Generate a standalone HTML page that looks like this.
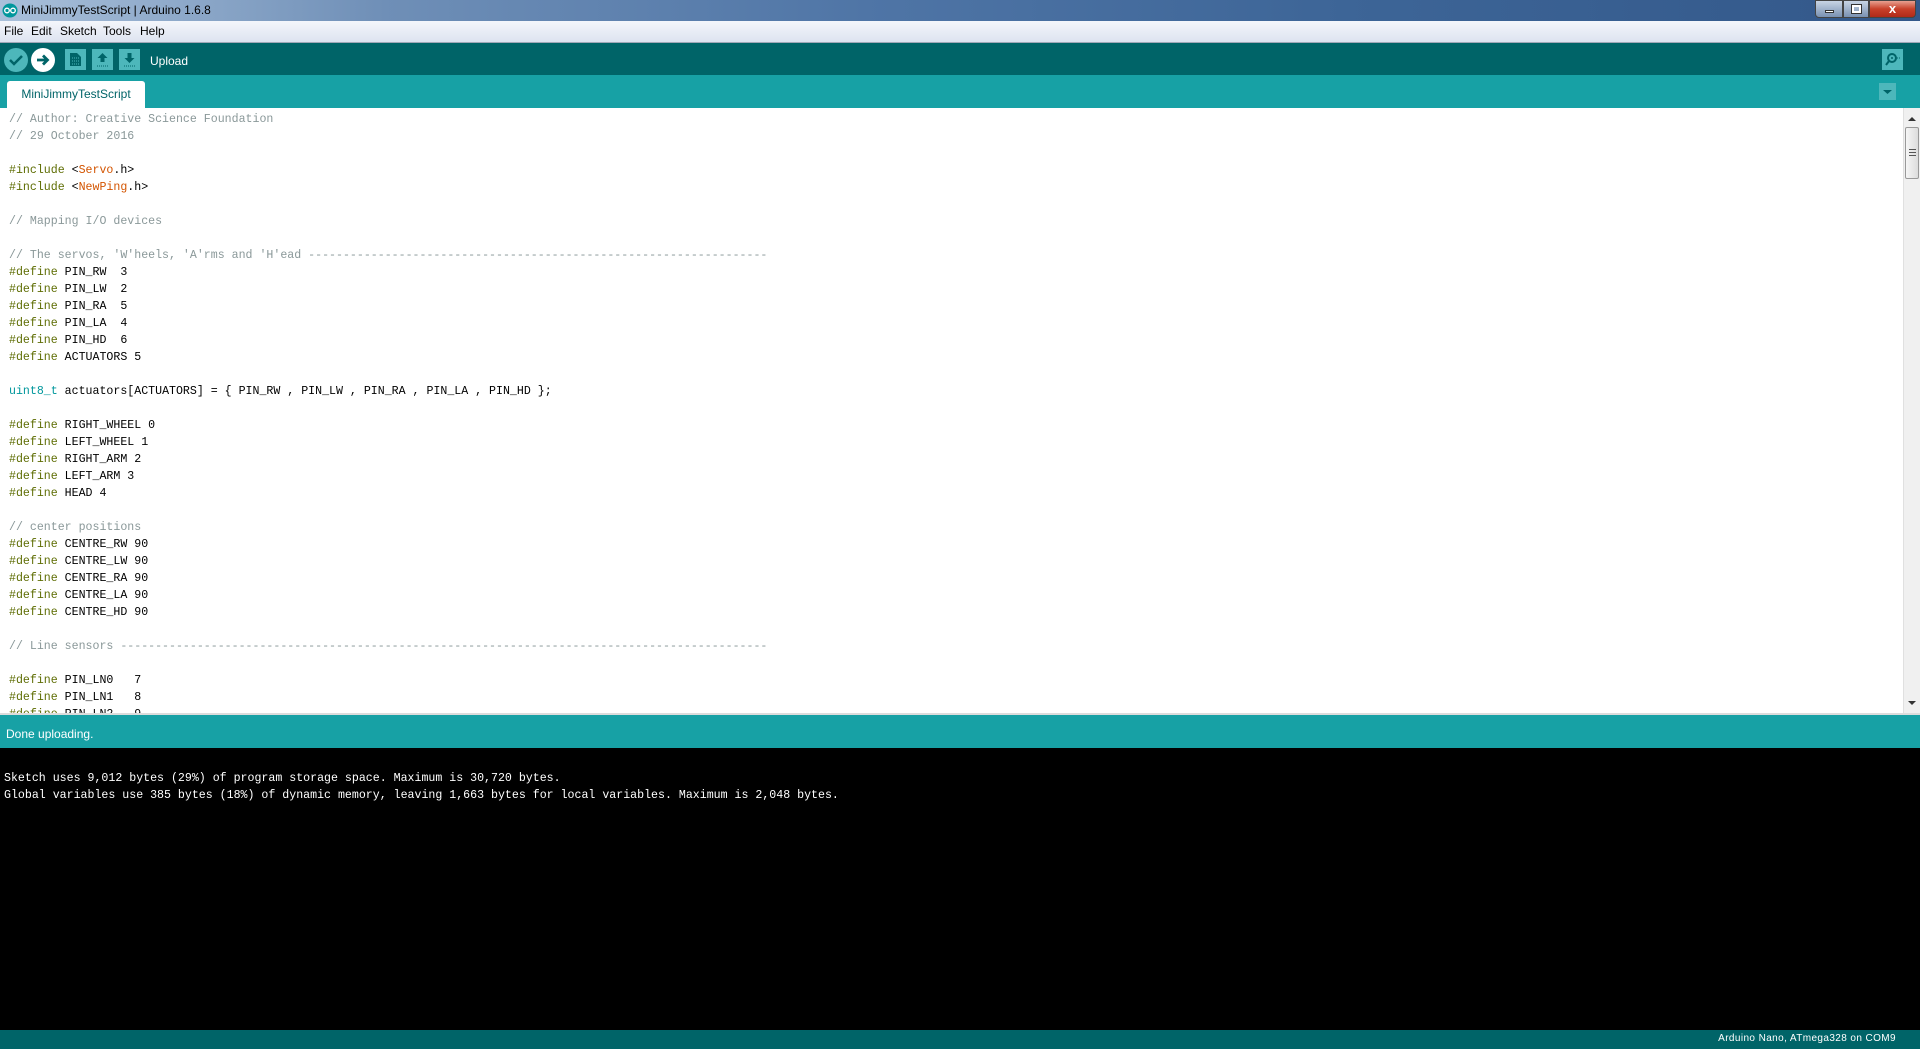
<!DOCTYPE html>
<html><head><meta charset="utf-8">
<style>
*{margin:0;padding:0;box-sizing:border-box}
body{width:1920px;height:1049px;overflow:hidden;background:#fff;font-family:"Liberation Sans",sans-serif;position:relative}
.abs{position:absolute}
#title{left:0;top:0;width:1920px;height:21px;background:linear-gradient(90deg,#a9c0da 0%,#6f8fb7 20%,#4f75a6 45%,#3d6597 70%,#33588a 100%);}
#title span{position:absolute;left:21px;top:3px;font-size:12px;color:#000}
#menu{left:0;top:21px;width:1920px;height:22px;background:linear-gradient(#f4f6fb,#dde3f0);border-bottom:1px solid #a0a8b8}
#menu span{position:absolute;top:3px;font-size:12px;color:#000}
#tool{left:0;top:43px;width:1920px;height:32px;background:#006468}
#tabs{left:0;top:75px;width:1920px;height:33px;background:#17a1a5}
#tab{left:7px;top:81px;width:138px;height:27px;background:#fff;border-radius:3px 3px 0 0;font-size:12px;color:#006468;text-align:center;line-height:26px}
#code{left:0;top:108px;width:1903px;height:605px;overflow:hidden;background:#fff}
pre{font-family:"Liberation Mono",monospace;font-size:11.6px;line-height:17px;color:#000;white-space:pre}
#code pre{position:absolute;left:9px;top:3px}
.c{color:#8a9899}.d{color:#5e6d03}.o{color:#d35400}.t{color:#00979c}
#sb{left:1903px;top:108px;width:17px;height:605px;background:#f0f0f0;border-left:1px solid #e0e0e0}
#status{left:0;top:713px;width:1920px;height:35px;background:#17a1a5;border-top:2px solid #dcdcdc}
#status span{position:absolute;left:6px;top:12px;font-size:12px;color:#fff}
#con{left:0;top:748px;width:1920px;height:282px;background:#000}
#con pre{position:absolute;left:4px;top:22px;color:#fff}
#bot{left:0;top:1030px;width:1920px;height:19px;background:#006468}
#bot span{position:absolute;right:24px;top:3px;font-size:10px;color:#fff;letter-spacing:.4px}
</style></head><body>
<div id="title" class="abs">
<svg class="abs" style="left:2px;top:3px" width="16" height="15"><ellipse cx="8" cy="7.5" rx="7.5" ry="7" fill="#00979c"/><circle cx="5" cy="7.5" r="2.3" fill="none" stroke="#fff" stroke-width="1.3"/><circle cx="11" cy="7.5" r="2.3" fill="none" stroke="#fff" stroke-width="1.3"/></svg>
<span>MiniJimmyTestScript | Arduino 1.6.8</span>
<div class="abs" style="left:1815px;top:0;width:28px;height:18px;background:linear-gradient(#c8d4e4,#7a92b2);border:1px solid #444;border-radius:0 0 0 4px"><div class="abs" style="left:9px;top:9px;width:9px;height:3px;background:#fff;border:1px solid #333"></div></div>
<div class="abs" style="left:1843px;top:0;width:26px;height:18px;background:linear-gradient(#c8d4e4,#7a92b2);border:1px solid #444"><div class="abs" style="left:8px;top:4px;width:9px;height:8px;border:2px solid #fff;outline:1px solid #333"></div></div>
<div class="abs" style="left:1869px;top:0;width:47px;height:18px;background:linear-gradient(#e8a090,#c8402a 50%,#b02a18);border:1px solid #444;border-radius:0 0 4px 0;color:#fff;font-weight:bold;font-size:13px;text-align:center;line-height:16px">x</div>
</div>
<div id="menu" class="abs"><span style="left:4px">File</span><span style="left:31px">Edit</span><span style="left:60px">Sketch</span><span style="left:103px">Tools</span><span style="left:140px">Help</span></div>
<div id="tool" class="abs"></div>
<svg class="abs" style="left:0;top:43px" width="200" height="32">
<circle cx="16" cy="17" r="12" fill="#4db7bb"/><path d="M10 17 l4 4 l8 -8" stroke="#006468" stroke-width="2.5" fill="none"/>
<circle cx="43" cy="17" r="12" fill="#fff"/><path d="M37 17 h9 M43 12.5 l4.5 4.5 l-4.5 4.5" stroke="#006468" stroke-width="2.8" fill="none"/>
<rect x="65" y="6" width="21" height="21" fill="#4db7bb"/><path d="M70 10 h7 l4 4 v9 h-11 z" fill="#006468"/><path d="M72 15 h7 M72 18 h7 M72 21 h7" stroke="#4db7bb" stroke-dasharray="1 1"/>
<rect x="92" y="6" width="21" height="21" fill="#4db7bb"/><path d="M102.5 10 l5 5 h-3 v4 h-4 v-4 h-3 z" fill="#006468"/><path d="M97 23 h11" stroke="#006468" stroke-dasharray="1 1"/>
<rect x="119" y="6" width="21" height="21" fill="#4db7bb"/><path d="M129.5 20 l5 -5 h-3 v-5 h-4 v5 h-3 z" fill="#006468"/><path d="M124 23 h11" stroke="#006468" stroke-dasharray="1 1"/>
<text x="150" y="22" font-family="Liberation Sans" font-size="12" fill="#fff">Upload</text>
</svg>
<svg class="abs" style="left:1882px;top:49px" width="21" height="21"><rect width="21" height="21" fill="#4db7bb"/><circle cx="10" cy="9" r="4" fill="none" stroke="#006468" stroke-width="2"/><circle cx="10" cy="9" r="1" fill="#006468"/><path d="M7 12 l-3 4" stroke="#006468" stroke-width="2"/><path d="M15 9 h3" stroke="#006468" stroke-dasharray="1 1"/></svg>
<div id="tabs" class="abs"></div>
<div id="tab" class="abs">MiniJimmyTestScript</div>
<svg class="abs" style="left:1879px;top:83px" width="17" height="17"><rect width="17" height="17" fill="#4db7bb"/><path d="M4 7 h9 l-4.5 4 z" fill="#006468"/></svg>
<div id="code" class="abs"><pre><span class="c">// Author: Creative Science Foundation</span>
<span class="c">// 29 October 2016</span>

<span class="d">#include</span> &lt;<span class="o">Servo</span>.h&gt;
<span class="d">#include</span> &lt;<span class="o">NewPing</span>.h&gt;

<span class="c">// Mapping I/O devices</span>

<span class="c">// The servos, 'W'heels, 'A'rms and 'H'ead ------------------------------------------------------------------</span>
<span class="d">#define</span> PIN_RW  3
<span class="d">#define</span> PIN_LW  2
<span class="d">#define</span> PIN_RA  5
<span class="d">#define</span> PIN_LA  4
<span class="d">#define</span> PIN_HD  6
<span class="d">#define</span> ACTUATORS 5

<span class="t">uint8_t</span> actuators[ACTUATORS] = { PIN_RW , PIN_LW , PIN_RA , PIN_LA , PIN_HD };

<span class="d">#define</span> RIGHT_WHEEL 0
<span class="d">#define</span> LEFT_WHEEL 1
<span class="d">#define</span> RIGHT_ARM 2
<span class="d">#define</span> LEFT_ARM 3
<span class="d">#define</span> HEAD 4

<span class="c">// center positions</span>
<span class="d">#define</span> CENTRE_RW 90
<span class="d">#define</span> CENTRE_LW 90
<span class="d">#define</span> CENTRE_RA 90
<span class="d">#define</span> CENTRE_LA 90
<span class="d">#define</span> CENTRE_HD 90

<span class="c">// Line sensors ---------------------------------------------------------------------------------------------</span>

<span class="d">#define</span> PIN_LN0   7
<span class="d">#define</span> PIN_LN1   8
<span class="d">#define</span> PIN_LN2   9</pre></div>
<div id="sb" class="abs">
<svg class="abs" style="left:3px;top:8px" width="10" height="6"><path d="M1 5 L5 1 L9 5 z" fill="#333"/></svg>
<div class="abs" style="left:1px;top:19px;width:14px;height:52px;background:linear-gradient(90deg,#f6f6f6,#dcdcdc);border:1px solid #999;border-radius:2px"><div class="abs" style="left:3px;top:21px;width:7px;height:7px;border-top:1px solid #555;border-bottom:1px solid #555"></div><div class="abs" style="left:3px;top:24px;width:7px;height:1px;background:#555"></div></div>
<svg class="abs" style="left:3px;top:592px" width="10" height="6"><path d="M1 1 L5 5 L9 1 z" fill="#333"/></svg>
</div>
<div id="status" class="abs"><span>Done uploading.</span></div>
<div id="con" class="abs"><pre>Sketch uses 9,012 bytes (29%) of program storage space. Maximum is 30,720 bytes.
Global variables use 385 bytes (18%) of dynamic memory, leaving 1,663 bytes for local variables. Maximum is 2,048 bytes.</pre></div>
<div id="bot" class="abs"><span>Arduino Nano, ATmega328 on COM9</span></div>
</body></html>
